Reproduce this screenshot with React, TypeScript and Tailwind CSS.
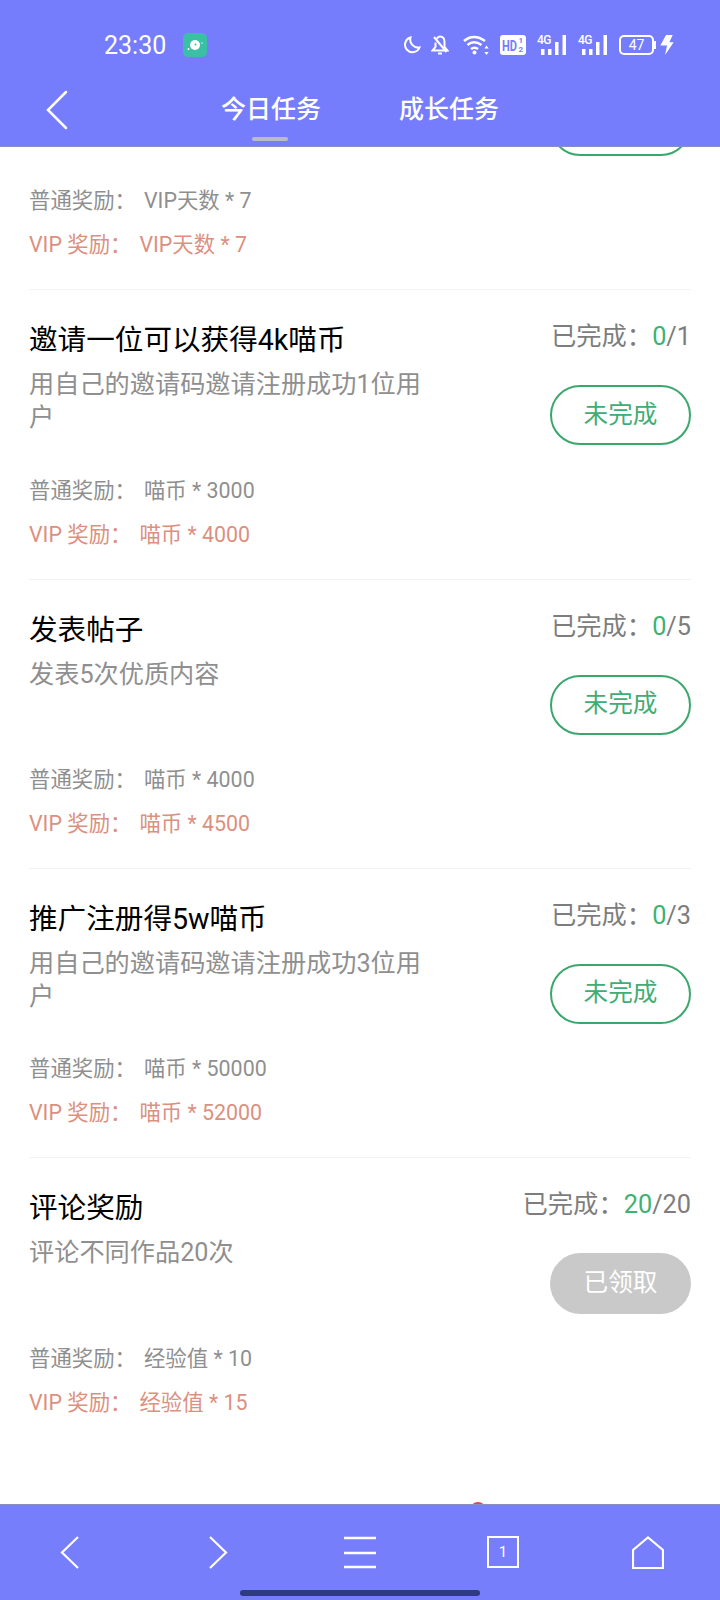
import React from 'react';

const font = {fontFamily: 'Roboto, "Noto Sans CJK SC", sans-serif'};

type Task = {
  title: string;
  desc: string;
  done: string;
  total: string;
  normal: string;
  vip: string;
  claimed?: boolean;
};

const tasks: Task[] = [
  {title: '', desc: '', done: '0', total: '1', normal: 'VIP天数 * 7', vip: 'VIP天数 * 7'},
  {title: '邀请一位可以获得4k喵币', desc: '用自己的邀请码邀请注册成功1位用户', done: '0', total: '1', normal: '喵币 * 3000', vip: '喵币 * 4000'},
  {title: '发表帖子', desc: '发表5次优质内容', done: '0', total: '5', normal: '喵币 * 4000', vip: '喵币 * 4500'},
  {title: '推广注册得5w喵币', desc: '用自己的邀请码邀请注册成功3位用户', done: '0', total: '3', normal: '喵币 * 50000', vip: '喵币 * 52000'},
  {title: '评论奖励', desc: '评论不同作品20次', done: '20', total: '20', normal: '经验值 * 10', vip: '经验值 * 15', claimed: true},
];

function Signal() {
  return (
    <div className="relative h-[20px] w-[30px]">
      <span className="absolute top-0 left-0 text-[12px] leading-[11px] font-medium tracking-[-0.5px] text-white">4G</span>
      <svg width="30" height="20" viewBox="0 0 30 20" fill="white">
        <rect x="4" y="14" width="3.500" height="6" />
        <rect x="11" y="14" width="3.500" height="6" />
        <rect x="18" y="7" width="3.500" height="13" />
        <rect x="25.500" y="0" width="3.500" height="20" />
      </svg>
    </div>
  );
}

function StatusIcons() {
  return (
    <div className="flex items-center">
      {/* moon */}
      <svg width="18" height="18" viewBox="0 0 18 18" fill="none" stroke="white" strokeWidth="2" className="mr-[10px]">
        <path d="M7.500 1.500a7.500 7.500 0 1 0 9 10A8 8 0 0 1 7.500 1.500z" />
      </svg>
      {/* muted bell */}
      <svg width="18" height="20" viewBox="0 0 18 20" fill="none" stroke="white" strokeWidth="2" className="mr-[14px]">
        <path d="M5.500 4C6.500 2.500 7.500 1.500 9 1.500c3 0 4.500 2.500 4.500 5.500v5l3 3.500H1.500l3-3.500V7.500" />
        <path d="M7 18.500h4" />
        <path d="M3 2l12.500 15" />
      </svg>
      {/* wifi */}
      <svg width="26" height="20" viewBox="0 0 26 20" fill="none" stroke="white" strokeWidth="2.500" className="mr-[11px]">
        <path d="M1 6C7 .5 15 .5 22 6" />
        <path d="M4.500 10c4-3.500 9-3.500 14 0" />
        <path d="M8 14c2-1.500 5-1.500 7 0" />
        <circle cx="11.500" cy="17.500" r="2" fill="white" stroke="none" />
        <path d="M23.500 10.500l2.200 3h-4.400zM23.500 20l2.200-3h-4.400z" fill="white" stroke="none" />
      </svg>
      {/* HD 1/2 */}
      <svg width="26" height="20" viewBox="0 0 26 20" className="mr-[11px]">
        <rect width="26" height="20" rx="3" fill="white" />
        <text x="2" y="15.500" fontSize="15" fontWeight="700" textLength="15" lengthAdjust="spacingAndGlyphs" fill="#757dfc" fontFamily="Roboto, sans-serif">HD</text>
        <text x="18.500" y="8" fontSize="8" fontWeight="700" fill="#757dfc" fontFamily="Roboto, sans-serif">1</text>
        <text x="18.500" y="17" fontSize="8" fontWeight="700" fill="#757dfc" fontFamily="Roboto, sans-serif">2</text>
      </svg>
      <div className="mr-[11px] flex">
        <Signal />
      </div>
      <div className="mr-[11px] flex">
        <Signal />
      </div>
      {/* battery */}
      <div className="mr-[4px] flex items-center">
        <div className="flex h-[20px] w-[35px] items-center justify-center rounded-[5px] border-2 border-white text-[14px] leading-none text-white">47</div>
        <div className="h-[8px] w-[2px] bg-white" />
      </div>
      <svg width="14" height="20" viewBox="0 0 14 21" fill="white">
        <path d="M6 0h7L9.500 7.500H14L5 21l2-10H0z" />
      </svg>
    </div>
  );
}

function Header() {
  return (
    <header className="relative z-10 h-[147px] shrink-0 border-b border-[#8a8cc4] bg-[#757dfc]">
      <div className="flex h-[90px] items-center justify-between pr-[46px] pl-[104px]">
        <div className="flex items-center gap-[17px]">
          <span className="text-[25px] leading-none text-white">23:30</span>
          <div className="flex h-[24px] w-[24px] items-center justify-center rounded-[5px] bg-[#3cc0a5]">
            <svg width="18" height="18" viewBox="0 0 18 18">
              <circle cx="9" cy="9" r="5" fill="white" />
              <circle cx="9.500" cy="8.500" r="1" fill="#3cc0a5" />
              <circle cx="2.500" cy="13" r="1" fill="white" />
              <circle cx="16" cy="7" r="0.700" fill="white" />
            </svg>
          </div>
        </div>
        <StatusIcons />
      </div>
      <div className="relative flex items-center pl-[46px]">
        <svg width="22" height="40" viewBox="0 0 22 40" fill="none" stroke="white" strokeWidth="2.500" strokeLinecap="round">
          <path d="M20 2L2 20l18 18" />
        </svg>
        <div className="ml-[153px] flex gap-[78px] text-[25px] leading-[36px] font-medium text-white">
          <div className="relative">
            今日任务
            <div className="absolute top-[45px] left-[31px] h-[4px] w-[36px] rounded-full bg-[#bcbcc8]" />
          </div>
          <div>成长任务</div>
        </div>
      </div>
    </header>
  );
}

function TaskCard({task, last}: {task: Task; last: boolean}) {
  return (
    <div className={last ? 'flex h-[289.300px] flex-col' : 'flex h-[289.300px] flex-col border-b border-[#f3f3f3]'}>
      <div className="flex justify-between">
        <div className="w-[400px] pt-[30px]">
          <div className="h-[40px] text-[28.600px] leading-[40px] text-black">{task.title}</div>
          <div className="mt-[8px] text-[25.200px] leading-[33px] text-[#8f8f8f]">{task.desc}</div>
        </div>
        <div className="flex flex-col items-end pt-[27px]">
          <div className="text-[25.300px] leading-[40px] text-[#7d7d7d]">
            已完成：<span className="text-[#3cb371]">{task.done}</span>/{task.total}
          </div>
          {task.claimed ? (
            <div className="mt-[28px] flex h-[61px] w-[141px] items-center justify-center rounded-full bg-[#c9c9c9] text-[24.600px] text-white">已领取</div>
          ) : (
            <div className="mt-[28px] flex h-[60px] w-[141px] items-center justify-center rounded-full border-2 border-[#3aa76d] text-[24.600px] text-[#3fad74]">未完成</div>
          )}
        </div>
      </div>
      <div className="mt-auto pb-[22px] text-[21.400px] leading-[44px]">
        <div className="text-[#8f8f8f]">
          普通奖励：<span className="ml-[8px]">{task.normal}</span>
        </div>
        <div className="text-[#dc9080]">
          VIP 奖励：<span className="ml-[8px]">{task.vip}</span>
        </div>
      </div>
    </div>
  );
}

function Footer() {
  return (
    <footer className="relative h-[96px] shrink-0 border-t border-[#8a8cc4] bg-[#767efc]">
      {/* badge that peeks out above the bar */}
      <div className="absolute top-[-3px] left-[470px] -z-10 h-[16px] w-[16px] rounded-full bg-[#e0455c]" />
      <div className="grid grid-cols-5 pt-[31px]">
        <div className="flex justify-center pr-[4px]">
          <svg width="20" height="33" viewBox="0 0 20 33" fill="none" stroke="white" strokeWidth="2.200">
            <path d="M18 1L2 16.500 18 32" />
          </svg>
        </div>
        <div className="flex justify-center pl-[4px]">
          <svg width="20" height="33" viewBox="0 0 20 33" fill="none" stroke="white" strokeWidth="2.200">
            <path d="M2 1l16 15.500L2 32" />
          </svg>
        </div>
        <div className="flex justify-center">
          <svg width="32" height="33" viewBox="0 0 32 33" fill="none" stroke="white" strokeWidth="2.500">
            <path d="M0 2h32M0 17h32M0 31h32" />
          </svg>
        </div>
        <div className="flex justify-center pr-[2px]">
          <div className="flex h-[32px] w-[32px] items-center justify-center border-2 border-white text-[15px] leading-none text-white">1</div>
        </div>
        <div className="flex justify-center">
          <svg width="32" height="33" viewBox="0 0 32 33" fill="none" stroke="white" strokeWidth="2.200">
            <path d="M1 32V14L16 1.500 31 14v18z" />
          </svg>
        </div>
      </div>
      <div className="absolute bottom-[4px] left-[240px] h-[6px] w-[240px] rounded-full bg-[#2f3a80]" />
    </footer>
  );
}

export default function App() {
  return (
    <div className="relative isolate flex h-[1600px] w-[720px] flex-col overflow-hidden bg-white" style={font}>
      <Header />
      <main className="min-h-0 flex-1 overflow-hidden px-[29px]">
        {/* list is scrolled, the first card sits half under the header */}
        <div className="-mt-[146px]">
          {tasks.map((task, i) => (
            <TaskCard key={i} task={task} last={i === tasks.length - 1} />
          ))}
        </div>
      </main>
      <Footer />
    </div>
  );
}
